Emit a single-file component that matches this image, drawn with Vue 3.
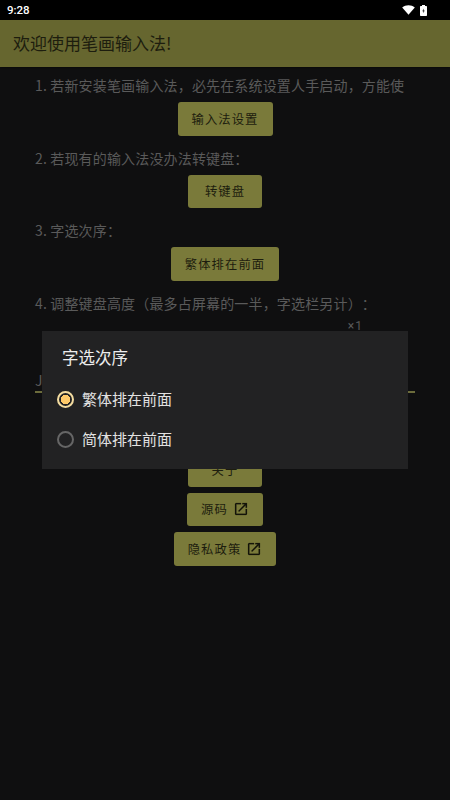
<script setup>
const linkIcon = 'M19 19H5V5h7V3H5c-1.11 0-2 .9-2 2v14c0 1.1.89 2 2 2h14c1.1 0 2-.9 2-2v-7h-2v7zM14 3v2h3.59l-9.83 9.83 1.41 1.41L19 6.41V10h2V3h-7z'
const options = [
  { label: '繁体排在前面', checked: true },
  { label: '简体排在前面', checked: false }
]
</script>

<template>
  <div class="screen">
    <header class="status">
      <span class="time">9:28</span>
      <span class="status-icons">
        <svg class="wifi" width="13" height="10" viewBox="0 0 13 10"><path d="M0.2 2.6C2 1 4.1.3 6.5.3s4.500.7 6.300 2.300L6.500 9.700z" fill="#fff"/></svg>
        <svg class="battery" width="7" height="11" viewBox="0 0 7 11"><path d="M2 0h3v1h1.300c.4 0 .7.3.7.700v8.600c0 .4-.3.7-.7.700H.700C.3 11 0 10.700 0 10.300V1.700C0 1.300.3 1 .7 1H2z" fill="#fff"/><path d="M3.800 3.500 2.300 6.300h1v2l1.400-2.800h-1z" fill="#222"/></svg>
      </span>
    </header>

    <div class="appbar">欢迎使用笔画输入法!</div>

    <main class="content">
      <p class="step">1. 若新安装笔画输入法，必先在系统设置人手启动，方能使</p>
      <button class="btn">输入法设置</button>

      <p class="step">2. 若现有的输入法没办法转键盘：</p>
      <button class="btn">转键盘</button>

      <p class="step">3. 字选次序：</p>
      <button class="btn">繁体排在前面</button>

      <p class="step">4. 调整键盘高度（最多占屏幕的一半，字选栏另计）：</p>
      <div class="scale">×1</div>
      <div class="slider-label">J</div>
      <div class="track"></div>

      <div class="links">
        <button class="btn">关于</button>
        <button class="btn">源码
          <svg class="link" viewBox="0 0 24 24"><path :d="linkIcon" fill="#14140a" stroke="#14140a" stroke-width=".3"/></svg>
        </button>
        <button class="btn">隐私政策
          <svg class="link" viewBox="0 0 24 24"><path :d="linkIcon" fill="#14140a" stroke="#14140a" stroke-width=".3"/></svg>
        </button>
      </div>
    </main>

    <section class="dialog">
      <h2 class="dialog-title">字选次序</h2>
      <div v-for="o in options" :key="o.label" class="option">
        <span class="radio" :class="{ on: o.checked }"></span>
        <span>{{ o.label }}</span>
      </div>
    </section>
  </div>
</template>

<style>
html, body { background: #0f0f10; }
</style>

<style scoped>
.screen {
  position: relative;
  width: 450px;
  height: 800px;
  overflow: hidden;
  background: #0f0f10;
  font-family: "Noto Sans CJK SC", "Noto Sans", sans-serif;
  text-spacing-trim: space-all;
}
.status {
  height: 20px;
  background: #000;
  display: flex;
  align-items: center;
  justify-content: space-between;
  padding: 0 23px 0 7px;
  box-sizing: border-box;
}
.time {
  font: 500 11.5px Roboto, sans-serif;
  color: #fff;
}
.status-icons { display: flex; align-items: center; gap: 5px; }
.wifi, .battery { display: block; }
.appbar {
  height: 47px;
  background: #66662f;
  color: #1d1d0e;
  font-size: 17px;
  line-height: 46px;
  padding-left: 13px;
  box-shadow: 0 1px 2px rgba(0, 0, 0, .4);
}
.content {
  display: flex;
  flex-direction: column;
  align-items: center;
  padding: 8px 35px 0;
}
.step {
  align-self: stretch;
  margin: 0 0 7px;
  height: 20px;
  line-height: 20px;
  font-size: 14px;
  letter-spacing: .16px;
  color: #5a5a5a;
  white-space: nowrap;
}
.btn {
  display: flex;
  align-items: center;
  justify-content: center;
  gap: 5px;
  min-width: 74px;
  height: 33.5px;
  padding: 0 14px;
  margin: 0 0 12px;
  border: 0;
  border-radius: 3px;
  background: #7a7a3a;
  color: #1d1d0e;
  font-family: inherit;
  font-size: 12.3px;
  letter-spacing: 1.1px;
}
.scale {
  align-self: flex-end;
  margin: -1px 52px 0 0;
  height: 14px;
  font: 12px/14px Roboto, sans-serif;
  letter-spacing: 1px;
  color: #5a5a5a;
}
.slider-label {
  align-self: flex-start;
  margin-top: 39px;
  height: 16px;
  line-height: 16px;
  font-size: 14px;
  color: #5a5a5a;
}
.track {
  align-self: stretch;
  height: 2px;
  margin-top: 3.5px;
  background: #6c6c3c;
}
.links {
  margin-top: 60px;
  display: flex;
  flex-direction: column;
  align-items: center;
  gap: 6px;
}
.links .btn { margin: 0; }
.link { width: 16px; height: 16px; flex: none; }
.dialog {
  position: absolute;
  left: 42px;
  top: 331px;
  width: 366px;
  height: 138px;
  box-sizing: border-box;
  background: #222223;
  padding: 13px 15px 0;
  color: #e2e2e2;
}
.dialog-title {
  margin: 0 0 8px 5px;
  font-size: 16.5px;
  font-weight: 400;
  line-height: 26px;
  color: #ededed;
}
.option {
  display: flex;
  align-items: center;
  gap: 8px;
  height: 40px;
  font-size: 15px;
}
.radio {
  width: 17px;
  height: 17px;
  margin-top: 2px;
  box-sizing: border-box;
  border: 2px solid #666;
  border-radius: 50%;
  flex: none;
}
.radio.on {
  border-color: #f3dca0;
  background: radial-gradient(circle, #fdc969 0 4.5px, #222223 5px);
}
</style>
